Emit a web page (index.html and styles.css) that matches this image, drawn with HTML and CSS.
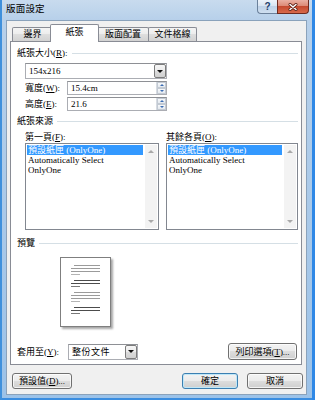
FILE: index.html
```html
<!DOCTYPE html>
<html lang="zh-Hant">
<head>
  <meta charset="UTF-8">
  <title>版面設定</title>
  <link rel="stylesheet" href="styles.css">
</head>
<body>
  <div class="window">
    <!-- Title bar -->
    <div class="titlebar">
      <span class="title">版面設定</span>
      <div class="caps">
        <span class="cap-help">?</span>
        <span class="cap-close">
          <svg width="10" height="8" viewBox="0 0 10 8">
            <path d="M2 1.5 L8 6.5 M8 1.5 L2 6.5" stroke="#5b2016" stroke-width="3" stroke-linecap="round"/>
            <path d="M2 1.5 L8 6.5 M8 1.5 L2 6.5" stroke="#fff" stroke-width="1.5" stroke-linecap="round"/>
          </svg>
        </span>
      </div>
    </div>

    <div class="client">
      <!-- Tabs -->
      <div class="tabs">
        <div class="tab t1">邊界</div>
        <div class="tab active">紙張</div>
        <div class="tab t3">版面配置</div>
        <div class="tab t4">文件格線</div>
      </div>

      <div class="panel">
        <div class="group-title"><span>紙張大小(<u>R</u>):</span></div>
        <div class="indent">
          <div class="combo size-combo">
            <span class="value">154x216</span>
            <span class="drop"></span>
          </div>
          <div class="row">
            <span class="row-label">寬度(<u>W</u>):</span>
            <div class="spin">
              <span class="value">15.4cm</span>
              <span class="spin-btns"><i class="up"></i><i class="down"></i></span>
            </div>
          </div>
          <div class="row">
            <span class="row-label">高度(<u>E</u>):</span>
            <div class="spin">
              <span class="value">21.6</span>
              <span class="spin-btns"><i class="up"></i><i class="down"></i></span>
            </div>
          </div>
        </div>

        <div class="group-title"><span>紙張來源</span></div>
        <div class="lists">
          <div class="col col-first">
            <div class="col-label">第一頁(<u>F</u>):</div>
            <div class="listbox">
              <div class="items">
                <div class="item sel">預設紙匣 (OnlyOne)</div>
                <div class="item">Automatically Select</div>
                <div class="item">OnlyOne</div>
              </div>
              <div class="scroll"><i class="up"></i><i class="down"></i></div>
            </div>
          </div>
          <div class="col col-other">
            <div class="col-label">其餘各頁(<u>O</u>):</div>
            <div class="listbox">
              <div class="items">
                <div class="item sel">預設紙匣 (OnlyOne)</div>
                <div class="item">Automatically Select</div>
                <div class="item">OnlyOne</div>
              </div>
              <div class="scroll"><i class="up"></i><i class="down"></i></div>
            </div>
          </div>
        </div>

        <div class="group-title preview-title"><span>預覽</span></div>
        <div class="page">
          <div class="para light">
            <div class="ln first"></div><div class="ln"></div><div class="ln"></div><div class="ln short"></div>
          </div>
          <div class="para dark">
            <div class="ln first"></div><div class="ln"></div><div class="ln short"></div>
          </div>
          <div class="para light">
            <div class="ln first"></div><div class="ln"></div><div class="ln"></div><div class="ln short"></div>
          </div>
          <div class="para dark">
            <div class="ln first"></div><div class="ln"></div><div class="ln short"></div>
          </div>
        </div>

        <div class="apply-row">
          <span class="apply-label">套用至(<u>Y</u>):</span>
          <div class="combo apply-combo">
            <span class="value cjk">整份文件</span>
            <span class="drop"></span>
          </div>
          <div class="btn print-btn">列印選項(<u>T</u>)...</div>
        </div>
      </div>

      <!-- Dialog buttons -->
      <div class="footer">
        <div class="btn default-btn">預設值(<u>D</u>)...</div>
        <div class="btn ok-btn">確定</div>
        <div class="btn cancel-btn">取消</div>
      </div>
    </div>
  </div>
</body>
</html>
```

FILE: styles.css
```css
* {
  box-sizing: border-box;
}

html, body {
  margin: 0;
  padding: 0;
}

body {
  width: 315px;
  height: 400px;
  overflow: hidden;
  font-family: "Liberation Serif", "Noto Sans CJK TC", serif;
  font-size: 9px;
  line-height: 12px;
  color: #000;
  background: #fff;
}

u {
  text-decoration: underline;
  text-underline-offset: 1px;
}

.window {
  width: 315px;
  height: 400px;
  display: flex;
  flex-direction: column;
  background: linear-gradient(to bottom, #c8dbee 0, #b7d0ea 20px, #9cc2e8 100%);
  box-shadow: inset 2px 0 0 #3f90dc, inset -3px 0 0 #2f88e6, inset 0 -2px 0 #3a8de0;
}

/* title bar */
.titlebar {
  height: 20px;
  display: flex;
  flex: none;
}

.title {
  padding: 3px 0 0 6px;
  font-size: 9.5px;
  letter-spacing: 0.2px;
}

.caps {
  margin-left: auto;
  margin-right: 6px;
  display: flex;
  align-self: flex-start;
}

.cap-help {
  width: 20px;
  height: 14px;
  border: 1px solid #6b819b;
  border-top: none;
  border-right: none;
  border-radius: 0 0 0 4px;
  background: linear-gradient(#edf3fa 0, #d6e3f1 50%, #bfd2e8 50%, #cfdff0 100%);
  display: flex;
  align-items: center;
  justify-content: center;
  font-family: "Liberation Sans", sans-serif;
  font-weight: bold;
  font-size: 10px;
  color: #23406b;
}

.cap-close {
  width: 32px;
  height: 14px;
  border: 1px solid #6e2b20;
  border-top: none;
  border-radius: 0 0 4px 0;
  background: linear-gradient(#eab0a3 0, #dc8a76 45%, #c54a30 50%, #d8694a 100%);
  display: flex;
  align-items: center;
  justify-content: center;
}

/* client area */
.client {
  flex: 1;
  margin: 0 8px 5px 6px;
  border: 1px solid #8aa2bb;
  background: #f0f0f0;
  display: flex;
  flex-direction: column;
}

.tabs {
  display: flex;
  align-items: flex-end;
  height: 17px;
  margin-top: 3px;
  padding-left: 5px;
}

.tab {
  height: 14px;
  border: 1px solid #898c95;
  border-bottom: none;
  border-radius: 2px 2px 0 0;
  background: linear-gradient(#f4f4f4 0, #ececec 50%, #dedede 50%, #d2d2d2 100%);
  text-align: center;
  line-height: 12px;
}

.t1 { width: 41px; }
.t3 { width: 52px; }
.t4 { width: 49px; margin-left: -1px; }

.tab.active {
  position: relative;
  z-index: 1;
  width: 49px;
  height: 18px;
  margin: 0 -2px -1px -3px;
  background: #fff;
  line-height: 15px;
}

.panel {
  background: #fff;
  border: 1px solid #898c95;
  margin: 0 4px 0 3px;
  padding: 0 3px 4px 6px;
}

.group-title {
  display: flex;
  align-items: center;
  height: 12px;
  margin-top: 4px;
  white-space: nowrap;
}

.group-title:first-child {
  margin-top: 5px;
}

.group-title::after {
  content: "";
  flex: 1;
  height: 1px;
  margin-left: 4px;
  background: #d5dfe5;
}

.preview-title {
  margin-top: 7px;
}

.indent {
  margin-left: 8px;
}

/* combo and spin boxes */
.combo {
  display: flex;
  height: 16px;
  border: 1px solid #abadb3;
  border-top-color: #8e9095;
  background: #fff;
}

.size-combo {
  width: 142px;
  margin-top: 4px;
}

.value {
  flex: 1;
  padding-left: 3px;
  line-height: 14px;
}

.drop {
  width: 12px;
  border: 1px solid #7c7c7c;
  border-radius: 2px;
  background: linear-gradient(#f6f6f6 0, #ebebeb 50%, #dcdcdc 50%, #d0d0d0 100%);
  display: flex;
  align-items: center;
  justify-content: center;
}

.drop::after {
  content: "";
  border-left: 3px solid transparent;
  border-right: 3px solid transparent;
  border-top: 3px solid #111;
}

.row {
  display: flex;
  align-items: center;
  height: 14px;
  margin-top: 2px;
}

.row-label {
  width: 42px;
}

.spin {
  display: flex;
  width: 100px;
  height: 14px;
  border: 1px solid #abadb3;
  border-top-color: #8e9095;
}

.spin .value {
  line-height: 12px;
}

.spin-btns {
  width: 10px;
  display: flex;
  flex-direction: column;
  border-left: 1px solid #d6dbe2;
}

.spin-btns i {
  flex: 1;
  display: flex;
  align-items: center;
  justify-content: center;
  background: linear-gradient(#f7f9fb, #e4e9ef);
  border: 1px solid #c3cad3;
}

.spin-btns i.up::after {
  content: "";
  border-left: 2px solid transparent;
  border-right: 2px solid transparent;
  border-bottom: 2px solid #3b6db3;
}

.spin-btns i.down::after {
  content: "";
  border-left: 2px solid transparent;
  border-right: 2px solid transparent;
  border-top: 2px solid #3b6db3;
}

/* list boxes */
.lists {
  display: flex;
  gap: 7px;
  margin: 4px 0 0 8px;
}

.col-first { width: 134px; }
.col-other { width: 132px; }

.col-label {
  height: 12px;
  white-space: nowrap;
}

.listbox {
  height: 87px;
  display: flex;
  border: 1px solid #828790;
}

.items {
  flex: 1;
  padding: 1px 0 0 1px;
}

.item {
  height: 10px;
  line-height: 10px;
  padding-left: 1px;
  white-space: nowrap;
}

.item.sel {
  background: #3399ff;
  color: #fff;
}

.scroll {
  width: 12px;
  margin: 1px 1px 1px 2px;
  background: #f3f3f3;
  display: flex;
  flex-direction: column;
  justify-content: space-between;
  align-items: center;
  padding: 5px 0;
}

.scroll i.up {
  border-left: 3px solid transparent;
  border-right: 3px solid transparent;
  border-bottom: 3px solid #a8a8a8;
}

.scroll i.down {
  border-left: 3px solid transparent;
  border-right: 3px solid transparent;
  border-top: 3px solid #a8a8a8;
}

/* preview */
.page {
  width: 51px;
  height: 70px;
  margin: 8px 0 0 43px;
  padding: 7px 0 0 10px;
  border: 1px solid #7f7f7f;
  background: #fff;
  box-shadow: 2px 2px 2px rgba(0, 0, 0, 0.35);
}

.para {
  margin-bottom: 5px;
}

.ln {
  width: 29px;
  height: 1px;
  margin-bottom: 2px;
}

.ln.first {
  width: 26px;
  margin-left: 3px;
}

.ln.short {
  width: 9px;
}

.light .ln { background: #9b9b9b; }
.dark .ln { background: #4c4c4c; }
.ln.short { opacity: 0.75; }

.apply-row {
  display: flex;
  align-items: center;
  height: 17px;
  margin-top: 16px;
  padding-right: 1px;
}

.apply-label {
  width: 51px;
}

.apply-combo {
  width: 70px;
}

.cjk {
  letter-spacing: 0.5px;
}

/* buttons */
.btn {
  height: 16px;
  border: 1px solid #707070;
  border-radius: 3px;
  background: linear-gradient(#f3f3f3 0, #ebebeb 50%, #dddddd 50%, #cfcfcf 100%);
  box-shadow: inset 0 0 0 1px rgba(255, 255, 255, 0.75);
  display: flex;
  align-items: center;
  justify-content: center;
  white-space: nowrap;
}

.print-btn {
  width: 69px;
  height: 17px;
  margin-left: auto;
}

.footer {
  display: flex;
  padding: 8px 3px 0 5px;
}

.default-btn {
  width: 60px;
}

.ok-btn {
  width: 56px;
  margin-left: auto;
  border-color: #3c7fb1;
  box-shadow: inset 0 0 0 1px #bfe7f8;
}

.cancel-btn {
  width: 56px;
  margin-left: 9px;
}
```
